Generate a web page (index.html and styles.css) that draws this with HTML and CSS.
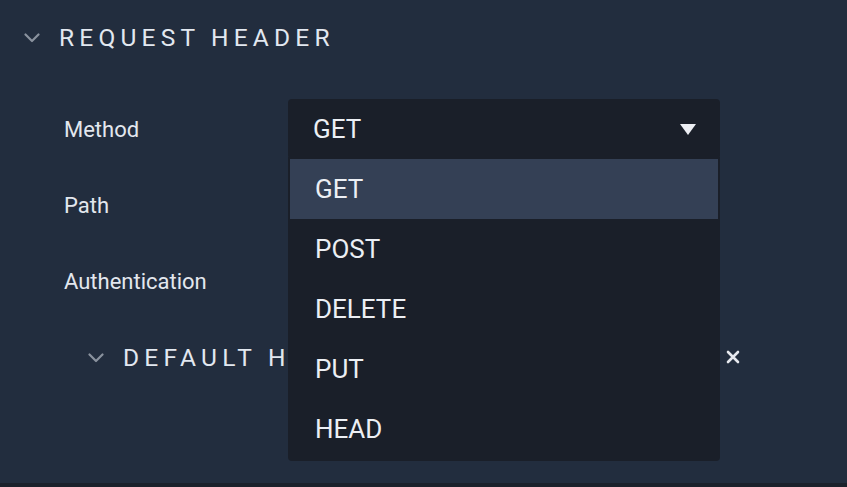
FILE: index.html
```html
<!DOCTYPE html>
<html>
<head>
<meta charset="utf-8">
<link rel="stylesheet" href="styles.css">
</head>
<body>
<div class="panel">
  <div class="section-header">
    <svg class="chev" width="16" height="10" viewBox="0 0 16 10"><path d="M1.5 1.5 L8 8 L14.5 1.5" fill="none" stroke="#8a929e" stroke-width="2.2" stroke-linecap="round" stroke-linejoin="round"/></svg>
    <span class="section-title">REQUEST HEADER</span>
  </div>
  <div class="fields">
    <div class="row">
      <div class="label">Method</div>
      <div class="select-wrap">
        <div class="select">
          <span>GET</span>
          <svg class="tri" width="16" height="11" viewBox="0 0 16 11"><path d="M0 0 H16 L8 11 Z" fill="#eceef3"/></svg>
        </div>
        <ul class="menu">
          <li class="item active">GET</li>
          <li class="item">POST</li>
          <li class="item">DELETE</li>
          <li class="item">PUT</li>
          <li class="item">HEAD</li>
        </ul>
      </div>
    </div>
    <div class="row">
      <div class="label">Path</div>
    </div>
    <div class="row">
      <div class="label">Authentication</div>
    </div>
    <div class="sub-row">
      <svg class="chev" width="16" height="10" viewBox="0 0 16 10"><path d="M1.5 1.5 L8 8 L14.5 1.5" fill="none" stroke="#8a929e" stroke-width="2.2" stroke-linecap="round" stroke-linejoin="round"/></svg>
      <span class="sub-title">DEFAULT HEADERS</span>
      <svg class="close" width="14" height="14" viewBox="0 0 14 14"><path d="M2 2 L12 12 M12 2 L2 12" stroke="#e6e8ee" stroke-width="2.6" stroke-linecap="round"/></svg>
    </div>
  </div>
</div>
<div class="bottom-strip"></div>
</body>
</html>
```

FILE: styles.css
```css
html, body {
  margin: 0;
  padding: 0;
}
body {
  background: #1b212b;
  font-family: Roboto, "Liberation Sans", sans-serif;
  color: #e3e7ee;
  width: 847px;
  height: 487px;
  overflow: hidden;
}
.panel {
  background: #222d3e;
  height: 483px;
}
.section-header {
  height: 74px;
  display: flex;
  align-items: center;
  padding-left: 24px;
}
.section-header .chev {
  margin-right: 19px;
  margin-top: 2px;
}
.section-title {
  font-size: 24.5px;
  letter-spacing: 5.2px;
  color: #e2e8f0;
  font-weight: 400;
}
.fields {
  padding-top: 17px;
  padding-left: 64px;
}
.row {
  height: 76px;
  display: flex;
  align-items: center;
}
.label {
  width: 224px;
  font-size: 22px;
  color: #e3e7ee;
}
.select-wrap {
  position: relative;
  width: 432px;
}
.select {
  height: 60px;
  background: #1a1f29;
  border-radius: 4px;
  display: flex;
  align-items: center;
  justify-content: space-between;
  padding: 0 24px 0 25px;
  box-sizing: border-box;
  font-size: 26px;
  color: #eceff4;
}
.menu {
  position: absolute;
  left: 0;
  right: 0;
  top: 58px;
  margin: 0;
  padding: 2px;
  list-style: none;
  background: #1a1f29;
  border-radius: 0 0 4px 4px;
  z-index: 5;
}
.item {
  height: 60px;
  display: flex;
  align-items: center;
  padding-left: 25px;
  font-size: 26px;
  color: #eceff4;
}
.item.active {
  background: #344055;
}
.sub-row {
  height: 76px;
  display: flex;
  align-items: center;
  padding-left: 24px;
  width: 676px;
  box-sizing: border-box;
}
.sub-row .chev {
  margin-right: 19px;
  margin-top: 2px;
}
.sub-title {
  font-size: 24.5px;
  letter-spacing: 5.2px;
  color: #e2e8f0;
  flex: 1;
  white-space: nowrap;
  overflow: hidden;
}
.close {
  flex: none;
}
```
